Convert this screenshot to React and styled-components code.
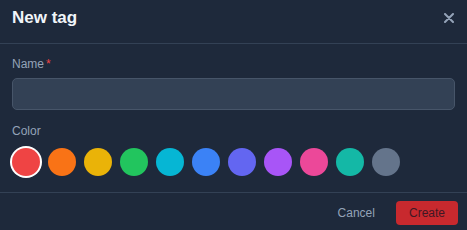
import React from "react";
import styled, { createGlobalStyle } from "styled-components";

const Global = createGlobalStyle`
  html, body { margin: 0; padding: 0; background: #1e293b; }
  body { font-family: "Liberation Sans", Arial, sans-serif; }
  * { box-sizing: border-box; }
`;

const Dialog = styled.div`
  width: 467px;
  height: 230px;
  background: #1e293b;
  display: flex;
  flex-direction: column;
  overflow: hidden;
`;

const Header = styled.div`
  flex-shrink: 0;
  height: 44px;
  padding: 0 10px 8px 12px;
  border-bottom: 1px solid #334155;
  display: flex;
  align-items: center;
  justify-content: space-between;
`;

const Title = styled.h2`
  margin: 0;
  font-size: 17px;
  font-weight: 700;
  color: #f1f5f9;
`;

const CloseButton = styled.button`
  width: 16px;
  height: 16px;
  padding: 0;
  border: none;
  background: transparent;
  color: #94a3b8;
  display: flex;
  align-items: center;
  justify-content: center;
  cursor: pointer;
`;

const Body = styled.div`
  flex-shrink: 0;
  padding: 12px 12px 16px;
  display: flex;
  flex-direction: column;
`;

const Label = styled.label`
  font-size: 12px;
  line-height: 16px;
  color: #94a3b8;
  margin-bottom: ${(p) => p.$mb}px;
`;

const Required = styled.span`
  color: #ef4444;
  margin-left: 2px;
`;

const Input = styled.input`
  flex-shrink: 0;
  height: 32px;
  width: 100%;
  background: #334155;
  border: 1px solid #475569;
  border-radius: 5px;
  color: #f1f5f9;
  outline: none;
  margin-bottom: 13px;
`;

const Swatches = styled.div`
  display: flex;
  gap: 8px;
`;

const Swatch = styled.button`
  flex-shrink: 0;
  width: 28px;
  height: 28px;
  padding: 0;
  border: none;
  border-radius: 50%;
  background: ${(p) => p.$color};
  box-shadow: ${(p) => (p.$selected ? "0 0 0 2px #ffffff" : "none")};
  cursor: pointer;
`;

const Footer = styled.div`
  flex-shrink: 0;
  border-top: 1px solid #334155;
  padding: 8px 9px;
  display: flex;
  justify-content: flex-end;
  gap: 8px;
`;

const Button = styled.button`
  height: 24px;
  padding: 0 13px;
  border: none;
  border-radius: 4px;
  font-family: "Liberation Sans", Arial, sans-serif;
  font-size: 12px;
  background: ${(p) => (p.$primary ? "#c8292e" : "transparent")};
  color: ${(p) => (p.$primary ? "#3f1824" : "#94a3b8")};
  cursor: pointer;
`;

const colors = [
  "#ef4444",
  "#f97316",
  "#eab308",
  "#22c55e",
  "#06b6d4",
  "#3b82f6",
  "#6366f1",
  "#a855f7",
  "#ec4899",
  "#14b8a6",
  "#64748b",
];

export default function App() {
  return (
    <>
      <Global />
      <Dialog>
        <Header>
          <Title>New tag</Title>
          <CloseButton aria-label="Close">
            <svg width="10" height="10" viewBox="0 0 10 10">
              <path d="M1 1L9 9M9 1L1 9" stroke="currentColor" strokeWidth="2" strokeLinecap="round" />
            </svg>
          </CloseButton>
        </Header>
        <Body>
          <Label $mb={6}>
            Name<Required>*</Required>
          </Label>
          <Input />
          <Label $mb={9}>Color</Label>
          <Swatches>
            {colors.map((c, i) => (
              <Swatch key={c} $color={c} $selected={i === 0} />
            ))}
          </Swatches>
        </Body>
        <Footer>
          <Button>Cancel</Button>
          <Button $primary>Create</Button>
        </Footer>
      </Dialog>
    </>
  );
}
